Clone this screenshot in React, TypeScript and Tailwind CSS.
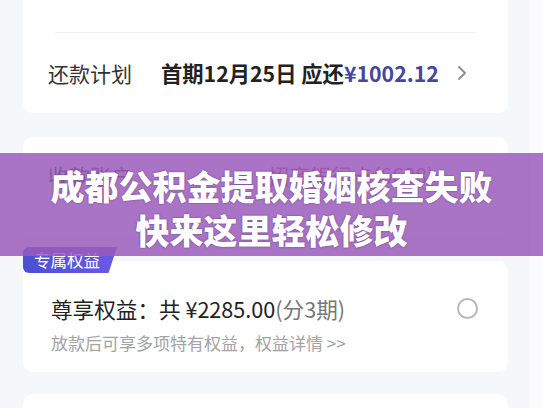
import React from "react";

const font = { fontFamily: '"Noto Sans CJK SC", "Noto Sans", sans-serif' };

export default function App() {
  return (
    <div
      className="relative flex h-[408px] w-[543px] overflow-hidden bg-[#f6f7fb]"
      style={font}
    >
      <div className="flex w-[530px] shrink-0 flex-col pl-[23px] pr-[22px]">
        {/* Card 1 */}
        <div className="-mt-[12px] flex shrink-0 flex-col rounded-[10px] bg-white">
          <div className="h-[44px]" />
          <div className="mx-[32px] h-px bg-[#f0f0f3]" />
          <div className="flex h-[80px] items-center pl-[25px]">
            <span className="text-[21px] leading-none text-[#333]">还款计划</span>
            <span className="ml-[29px] text-[21.3px] font-bold leading-none text-[#222]">
              首期12月25日 应还<span className="text-[#45469c]">¥1002.12</span>
            </span>
            <svg width="10" height="16" viewBox="0 0 10 16" className="ml-[18px]">
              <path d="M2 2 L8 8 L2 14" fill="none" stroke="#8c8c8c" strokeWidth="1.8" strokeLinecap="round" strokeLinejoin="round" />
            </svg>
          </div>
        </div>

        {/* Card 2 (partly hidden) */}
        <div className="mt-[24px] flex h-[100px] shrink-0 flex-col rounded-[10px] bg-white">
          <div className="flex items-center pl-[25px] pt-[28px]">
            <span className="text-[21px] leading-none text-[#333]">收款账户</span>
            <span className="ml-auto mr-[74px] text-[21px] leading-none text-[#d23c4e]">招商银行卡(6688)</span>
          </div>
        </div>

        {/* Card 3 */}
        <div className="relative mt-[24px] flex h-[111px] shrink-0 flex-col rounded-[10px] bg-white">
          <div
            className="absolute -top-[14px] left-0 z-10 flex h-[26px] w-[94px] items-center rounded-l-[6px] bg-gradient-to-r from-[#4b4fd4] to-[#6a5ae4] pl-[11px] text-[16.5px] leading-none text-white"
            style={{ clipPath: "polygon(0 0, 100% 0, 91% 100%, 0 100%)" }}
          >
            专属权益
          </div>
          <div className="flex items-center pl-[28px] pr-[30px] pt-[37px]">
            <span className="text-[21.6px] leading-none text-[#222]">
              尊享权益：共 ¥2285.00<span className="text-[#777]">(分3期)</span>
            </span>
            <span className="ml-auto h-[21px] w-[21px] rounded-full border-2 border-[#b8b8b8]" />
          </div>
          <div className="pl-[28px] pt-[14px] text-[17px] leading-none text-[#a3a3a3]">
            放款后可享多项特有权益，权益详情 &gt;&gt;
          </div>
        </div>

        {/* Card 4 */}
        <div className="mt-[22px] h-[60px] shrink-0 rounded-[10px] bg-white" />
      </div>
      <div className="w-[13px] shrink-0 bg-[#fbfbfd]" />

      {/* Overlay banner */}
      <div className="absolute left-0 top-[153px] z-20 flex h-[103px] w-full flex-col items-center bg-[#9a5cbb]/85 pt-[11px] text-[34px] font-black leading-[44px] text-white [text-shadow:0_0_2px_rgba(60,20,80,0.6)]">
        <div>成都公积金提取婚姻核查失败</div>
        <div>快来这里轻松修改</div>
      </div>
    </div>
  );
}
